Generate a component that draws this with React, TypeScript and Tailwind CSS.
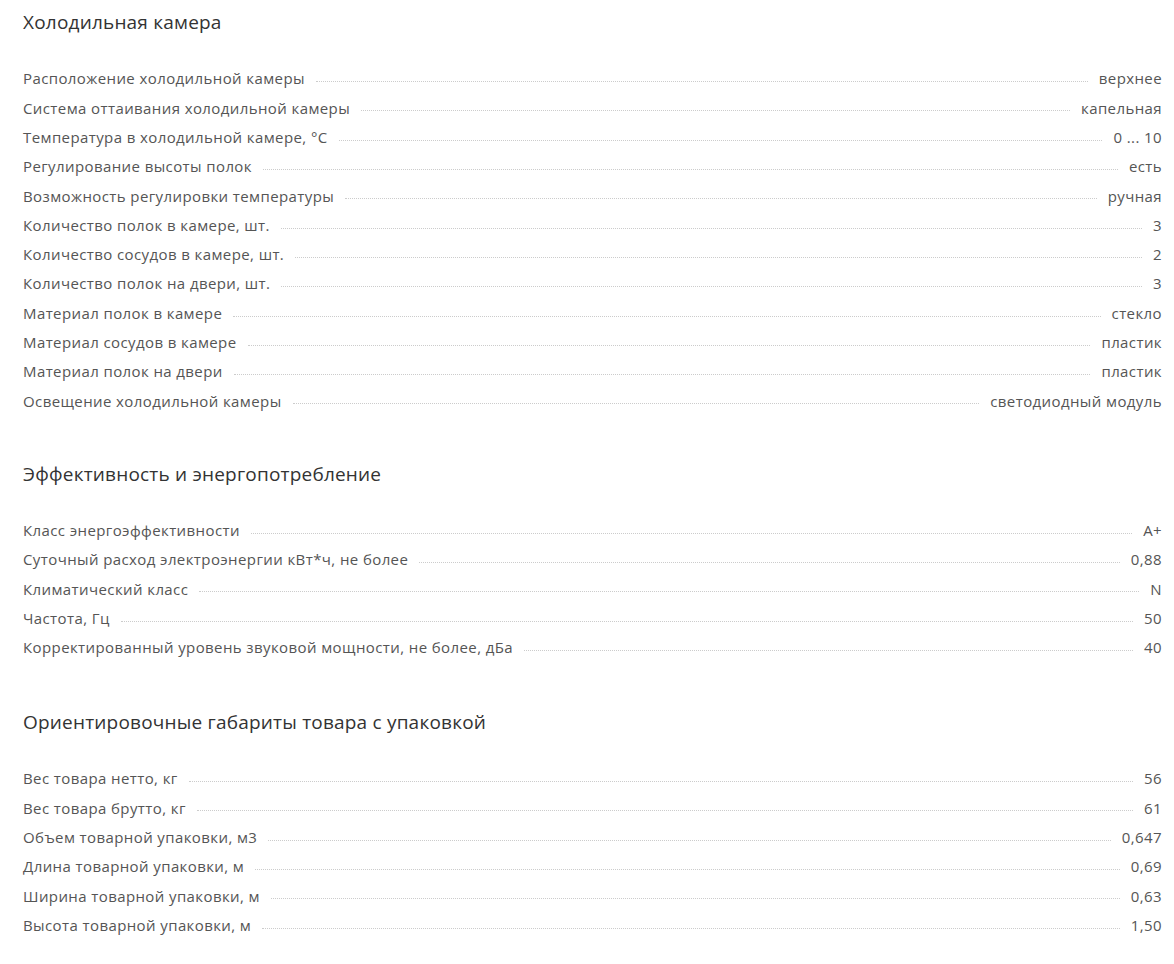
import React from "react";

type Row = [string, string];

const sections: { title: string; rows: Row[]; mt: string }[] = [
  {
    title: "Холодильная камера",
    mt: "mt-0",
    rows: [
      ["Расположение холодильной камеры", "верхнее"],
      ["Система оттаивания холодильной камеры", "капельная"],
      ["Температура в холодильной камере, °С", "0 ... 10"],
      ["Регулирование высоты полок", "есть"],
      ["Возможность регулировки температуры", "ручная"],
      ["Количество полок в камере, шт.", "3"],
      ["Количество сосудов в камере, шт.", "2"],
      ["Количество полок на двери, шт.", "3"],
      ["Материал полок в камере", "стекло"],
      ["Материал сосудов в камере", "пластик"],
      ["Материал полок на двери", "пластик"],
      ["Освещение холодильной камеры", "светодиодный модуль"],
    ],
  },
  {
    title: "Эффективность и энергопотребление",
    mt: "mt-[36px]",
    rows: [
      ["Класс энергоэффективности", "A+"],
      ["Суточный расход электроэнергии кВт*ч, не более", "0,88"],
      ["Климатический класс", "N"],
      ["Частота, Гц", "50"],
      ["Корректированный уровень звуковой мощности, не более, дБа", "40"],
    ],
  },
  {
    title: "Ориентировочные габариты товара с упаковкой",
    mt: "mt-[38px]",
    rows: [
      ["Вес товара нетто, кг", "56"],
      ["Вес товара брутто, кг", "61"],
      ["Объем товарной упаковки, м3", "0,647"],
      ["Длина товарной упаковки, м", "0,69"],
      ["Ширина товарной упаковки, м", "0,63"],
      ["Высота товарной упаковки, м", "1,50"],
    ],
  },
];

export default function App() {
  return (
    <div
      className="min-h-[964px] w-full bg-white pl-[23px] pr-[12px]"
      style={{ fontFamily: '"Open Sans", "Noto Sans", sans-serif' }}
    >
      {sections.map((s) => (
        <section key={s.title} className={s.mt}>
          <h2 className="flex h-[45px] items-center text-[19px] font-normal tracking-[0.2px] text-[#333333]">
            {s.title}
          </h2>
          <div className="mt-[19px]">
            {s.rows.map(([k, v]) => (
              <div
                key={k}
                className="flex h-[29.3px] items-center text-[15px] tracking-[0.4px] text-[#555555]"
              >
                <span className="whitespace-nowrap">{k}</span>
                <span className="mx-[11px] mt-[6px] h-0 flex-1 border-b border-dotted border-[#cccccc]" />
                <span className="whitespace-nowrap">{v}</span>
              </div>
            ))}
          </div>
        </section>
      ))}
    </div>
  );
}
